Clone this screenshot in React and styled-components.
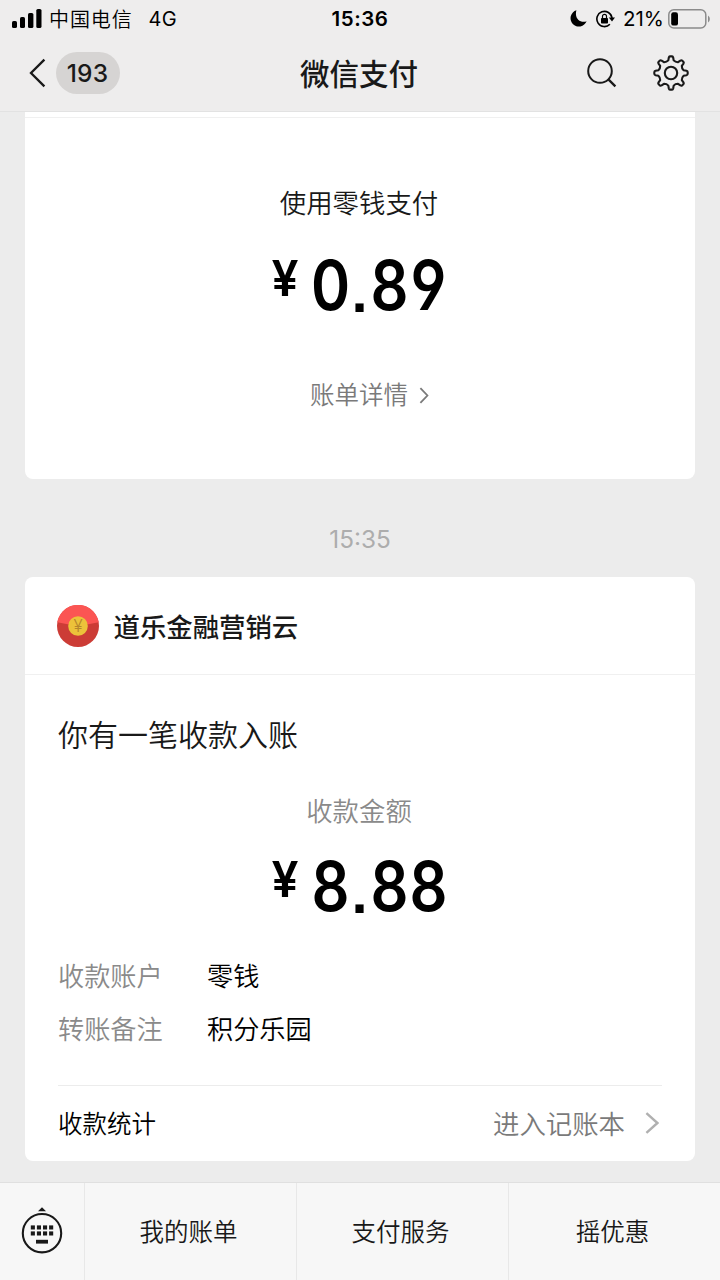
import React from 'react';
import styled, {createGlobalStyle} from "styled-components";


const GlobalStyle = createGlobalStyle`
  * {
    box-sizing: border-box;
  }
  body {
    margin: 0;
    background: #ededed;
    font-family: Inter, "Noto Sans CJK SC", sans-serif;
    font-weight: 350;
    color: #191919;
  }
`
const Page = styled.div`
  width: 720px;
  height: 1280px;
  overflow: hidden;
  display: flex;
  flex-direction: column;
  background: #ececec;
`
const StatusBar = styled.div`
  flex: none;
  height: 37px;
  padding: 0 9px 0 12px;
  display: grid;
  grid-template-columns: 1fr auto 1fr;
  align-items: center;
  background: #eeeded;
  color: #000;
  font-size: 19px;
  line-height: 37px;
`
const StatusLeft = styled.div`
  display: flex;
  align-items: center;
  height: 37px;
`
const Carrier = styled.span`
  margin-left: 7px;
  font-size: 20px;
  letter-spacing: 0.9px;
  font-family: "Noto Sans CJK SC", sans-serif;
`
const Network = styled.span`
  margin-left: 16px;
  padding-top: 1px;
  font-size: 20px;
  font-weight: 400;
  letter-spacing: 0.2px;
`
const Clock = styled.span`
  font-size: 20.5px;
  font-weight: 600;
  letter-spacing: 0.5px;
  margin-right: 3px;
`
const StatusRight = styled.div`
  display: flex;
  align-items: center;
  justify-content: flex-end;
  height: 37px;
`
const Percent = styled.span`
  margin: 0 4px 0 8px;
  font-size: 20.5px;
  font-weight: 400;
`
const NavBar = styled.div`
  flex: none;
  height: 75px;
  padding: 0 31px 2px 29px;
  display: grid;
  grid-template-columns: 1fr auto 1fr;
  align-items: center;
  background: #eeeded;
  border-bottom: 1px solid #e2e2e2;
`
const Back = styled.div`
  display: flex;
  align-items: center;
  gap: 9px;
`
const Unread = styled.span`
  width: 64px;
  height: 42px;
  padding-right: 1px;
  border-radius: 21px;
  background: #d6d4d3;
  font-size: 24.5px;
  font-weight: 450;
  letter-spacing: 0.2px;
  line-height: 43px;
  text-align: center;
`
const NavTitle = styled.h1`
  margin: 0;
  padding-top: 2px;
  font-size: 29.5px;
  font-weight: 500;
  line-height: 70px;
`
const NavActions = styled.div`
  display: flex;
  align-items: center;
  justify-content: flex-end;
  gap: 36px;
`
const Chat = styled.div`
  flex: 1;
  padding: 0 25px;
`
const Card = styled.section`
  height: ${props => props.$height}px;
  background: #fff;
  border-radius: ${props => props.$cut ? "0 0 8px 8px" : "8px"};
`
const CutLine = styled.div`
  height: 6px;
  border-bottom: 1px solid #f0f0f0;
`
const PayMethod = styled.div`
  padding: 65px 2px 0 0;
  font-size: 26.4px;
  line-height: 40px;
  text-align: center;
`
const AmountRow = styled.div`
  margin-top: ${props => props.$top}px;
  height: 64px;
  display: flex;
  justify-content: center;
  color: #000;
`
const Currency = styled.span`
  width: 26px;
  margin: 0 13px 0 -1px;
  display: flex;
  justify-content: center;
  font-size: 49px;
  font-weight: 600;
  line-height: 51px;
  transform: scaleX(0.98);
`
const Digit = styled.span`
  width: 39px;
  display: flex;
  justify-content: center;
  font-size: 69px;
  font-weight: 600;
  line-height: 64px;
  font-feature-settings: "ss01", "cv04";
  transform: scaleX(0.86);
`
const Point = styled.span`
  width: 20px;
  display: flex;
  justify-content: center;
  font-family: "Liberation Sans", Arial, sans-serif;
  font-size: 58px;
  font-weight: 700;
  line-height: 77px;
`
const Detail = styled.div`
  margin-top: 58px;
  padding-left: 19px;
  display: flex;
  align-items: center;
  justify-content: center;
  gap: 11px;
  color: #7a7a7a;
  font-size: 24.5px;
  line-height: 40px;
`
const Time = styled.div`
  height: 98px;
  padding-top: 12px;
  color: #adadad;
  font-size: 24.3px;
  font-weight: 400;
  line-height: 97px;
  text-align: center;
`
const CardHeader = styled.header`
  height: 98px;
  padding: 0 32px;
  display: flex;
  align-items: center;
  gap: 14.5px;
  border-bottom: 1px solid #f0f0f0;
  font-size: 26.4px;
  font-weight: 500;
`
const CardBody = styled.div`
  height: 410px;
  padding: 39px 0 0 33px;
`
const CardTitle = styled.h2`
  margin: 0;
  font-size: 30px;
  font-weight: 350;
  line-height: 42px;
`
const AmountLabel = styled.div`
  margin: 35px 35px 0 0;
  color: #8a8a8a;
  font-size: 26.4px;
  line-height: 40px;
  text-align: center;
`
const Centered = styled.div`
  margin-right: 33px;
`
const InfoList = styled.dl`
  margin: 33px 0 0;
  display: grid;
  grid-template-columns: 149px 1fr;
  font-size: 26.2px;
  line-height: 52.5px;
`
const InfoName = styled.dt`
  color: #8a8a8a;
`
const InfoValue = styled.dd`
  margin: 0;
  color: #000;
`
const CardFooter = styled.footer`
  height: 76px;
  margin: 0 33px;
  padding-bottom: 2px;
  display: flex;
  align-items: center;
  justify-content: space-between;
  border-top: 1px solid #ececec;
  color: #000;
  font-size: 24.5px;
`
const BookLink = styled.span`
  display: flex;
  align-items: center;
  gap: 20px;
  margin-right: 3px;
  color: #7a7a7a;
  font-size: 26.4px;
`
const MenuBar = styled.nav`
  flex: none;
  height: 98px;
  display: grid;
  grid-template-columns: 84px 212px 212px 212px;
  background: #f7f7f7;
  border-top: 1px solid #e0e0e0;
`
const MenuItem = styled.div`
  padding: ${props => props.$first ? "0 0 1px" : "0 4px 2px 0"};
  display: flex;
  align-items: center;
  justify-content: center;
  font-size: 24.5px;
  border-left: ${props => props.$first ? "none" : "1px solid #e8e8e8"};
`

const SignalIcon = () => (
    <svg width="30" height="19" viewBox="0 0 30 19">
        <rect x="0" y="12" width="5" height="7" rx="1.6"/>
        <rect x="8" y="8" width="5" height="11" rx="1.6"/>
        <rect x="16" y="4" width="5.4" height="15" rx="1.6"/>
        <rect x="24.3" y="0" width="5.2" height="19" rx="1.6"/>
    </svg>
)

const MoonIcon = () => (
    <svg width="17" height="17" viewBox="0 0 17 17">
        <path d="M6.4 0.3A8.3 8.3 0 1 0 16.6 11.2C11 13.4 4 9 6.4 0.3Z"/>
    </svg>
)

const Lock = styled.svg`
  margin-left: 9px;
`

const LockIcon = () => (
    <Lock width="19" height="18" viewBox="0 0 19 18">
        <path d="M13.9 14.3A7.6 7.6 0 1 1 16 8" fill="none" stroke="#000" strokeWidth="1.6"/>
        <path d="M12.8 7.4H19L16 11.6Z"/>
        <rect x="5" y="8" width="7" height="5.6" rx="0.8"/>
        <path d="M6.5 8.3V6.3a2 2 0 0 1 4 0V8.3" fill="none" stroke="#000" strokeWidth="1.2"/>
    </Lock>
)

const BatteryIcon = () => (
    <svg width="43" height="20" viewBox="0 0 43 20">
        <rect x="0.8" y="0.8" width="37" height="18.2" rx="5" fill="none" stroke="#8b8b8b" strokeWidth="1.5"/>
        <rect x="3.2" y="3.2" width="6.8" height="13.4" rx="2.2"/>
        <path d="M40 6.6A4 4 0 0 1 40 13.4Z" fill="#8b8b8b"/>
    </svg>
)

const BackIcon = () => (
    <svg width="18" height="30" viewBox="0 0 18 30">
        <path d="M15.4 1.6L2 15L15.4 28.4" fill="none" stroke="#191919" strokeWidth="2.3"/>
    </svg>
)

const SearchIcon = () => (
    <svg width="30" height="30" viewBox="0 0 30 30">
        <circle cx="13" cy="13" r="11.8" fill="none" stroke="#191919" strokeWidth="2"/>
        <path d="M21.4 21.4L28.4 28.4" stroke="#191919" strokeWidth="2.3"/>
    </svg>
)

const point = (radius, degrees) => {
    const angle = degrees * Math.PI / 180
    return `${(18 + radius * Math.sin(angle)).toFixed(2)} ${(18 - radius * Math.cos(angle)).toFixed(2)}`
}

const gearPath = [0, 45, 90, 135, 180, 225, 270, 315].map((a, i) => (
    `${i ? "L" : "M"}${point(12.9, a - 12)}L${point(15.6, a - 8)}Q${point(16.7, a - 6.5)} ${point(16.7, a - 3.5)}` +
    `L${point(16.7, a + 3.5)}Q${point(16.7, a + 6.5)} ${point(15.6, a + 8)}L${point(12.9, a + 12)}` +
    `Q${point(11.6, a + 22.5)} ${point(12.9, a + 33)}`
)).join("") + "Z"

const GearIcon = () => (
    <svg width="36" height="36" viewBox="0 0 36 36" fill="none" stroke="#191919" strokeWidth="2.1" strokeLinejoin="round">
        <path d={gearPath}/>
        <circle cx="18" cy="18" r="6.2"/>
    </svg>
)

const Arrow = ({width, height, color, stroke}) => (
    <svg width={width} height={height} viewBox={`0 0 ${width} ${height}`}>
        <path d={`M1.4 1.2L${width - 1.6} ${height / 2}L1.4 ${height - 1.2}`} fill="none" stroke={color} strokeWidth={stroke}/>
    </svg>
)

const PacketIcon = () => (
    <svg width="42" height="42" viewBox="0 0 42 42">
        <circle cx="21" cy="21" r="21" fill="#cc3c36"/>
        <path d="M0.3 17.3A21 21 0 0 1 41.7 17.3Q21 22.5 0.3 17.3Z" fill="#fb5553"/>
        <circle cx="21" cy="21" r="9.8" fill="#ecc23a"/>
        <text x="21" y="27" fill="#b5862c" fontSize="17" fontWeight="300" fontFamily="Inter" textAnchor="middle">¥</text>
    </svg>
)

const KeyboardIcon = () => (
    <svg width="42" height="48" viewBox="0 0 42 48" fill="#191919">
        <path d="M17 4.2L21 0.3L25 4.2Z"/>
        <circle cx="21" cy="26.2" r="19.2" fill="none" stroke="#191919" strokeWidth="2.1"/>
        {[18.4, 24.4].map(y => [9.8, 15.9, 22, 28.1].map(x => (
            <rect key={`${x}-${y}`} x={x} y={y} width="4.1" height="4.1"/>
        )))}
        <rect x="15" y="32.8" width="12" height="3.8"/>
    </svg>
)

const Amount = ({value, top}) => (
    <AmountRow $top={top}>
        <Currency>¥</Currency>
        {value.split("").map((char, i) => (
            char === "." ? <Point key={i}>.</Point> : <Digit key={i}>{char}</Digit>
        ))}
    </AmountRow>
)

const App = () => {
    return (
        <Page>
            <GlobalStyle/>
            <StatusBar>
                <StatusLeft>
                    <SignalIcon/>
                    <Carrier>中国电信</Carrier>
                    <Network>4G</Network>
                </StatusLeft>
                <Clock>15:36</Clock>
                <StatusRight>
                    <MoonIcon/>
                    <LockIcon/>
                    <Percent>21%</Percent>
                    <BatteryIcon/>
                </StatusRight>
            </StatusBar>
            <NavBar>
                <Back>
                    <BackIcon/>
                    <Unread>193</Unread>
                </Back>
                <NavTitle>微信支付</NavTitle>
                <NavActions>
                    <SearchIcon/>
                    <GearIcon/>
                </NavActions>
            </NavBar>
            <Chat>
                <Card $height={367} $cut>
                    <CutLine/>
                    <PayMethod>使用零钱支付</PayMethod>
                    <Amount value="0.89" top={30}/>
                    <Detail>
                        账单详情
                        <Arrow width={10} height={17} color="#7a7a7a" stroke={1.8}/>
                    </Detail>
                </Card>
                <Time>15:35</Time>
                <Card $height={584}>
                    <CardHeader>
                        <PacketIcon/>
                        道乐金融营销云
                    </CardHeader>
                    <CardBody>
                        <CardTitle>你有一笔收款入账</CardTitle>
                        <AmountLabel>收款金额</AmountLabel>
                        <Centered>
                            <Amount value="8.88" top={23}/>
                        </Centered>
                        <InfoList>
                            <InfoName>收款账户</InfoName>
                            <InfoValue>零钱</InfoValue>
                            <InfoName>转账备注</InfoName>
                            <InfoValue>积分乐园</InfoValue>
                        </InfoList>
                    </CardBody>
                    <CardFooter>
                        收款统计
                        <BookLink>
                            进入记账本
                            <Arrow width={14} height={22} color="#b0b0b0" stroke={2.4}/>
                        </BookLink>
                    </CardFooter>
                </Card>
            </Chat>
            <MenuBar>
                <MenuItem $first><KeyboardIcon/></MenuItem>
                <MenuItem>我的账单</MenuItem>
                <MenuItem>支付服务</MenuItem>
                <MenuItem>摇优惠</MenuItem>
            </MenuBar>
        </Page>
    );
};

export default App;
